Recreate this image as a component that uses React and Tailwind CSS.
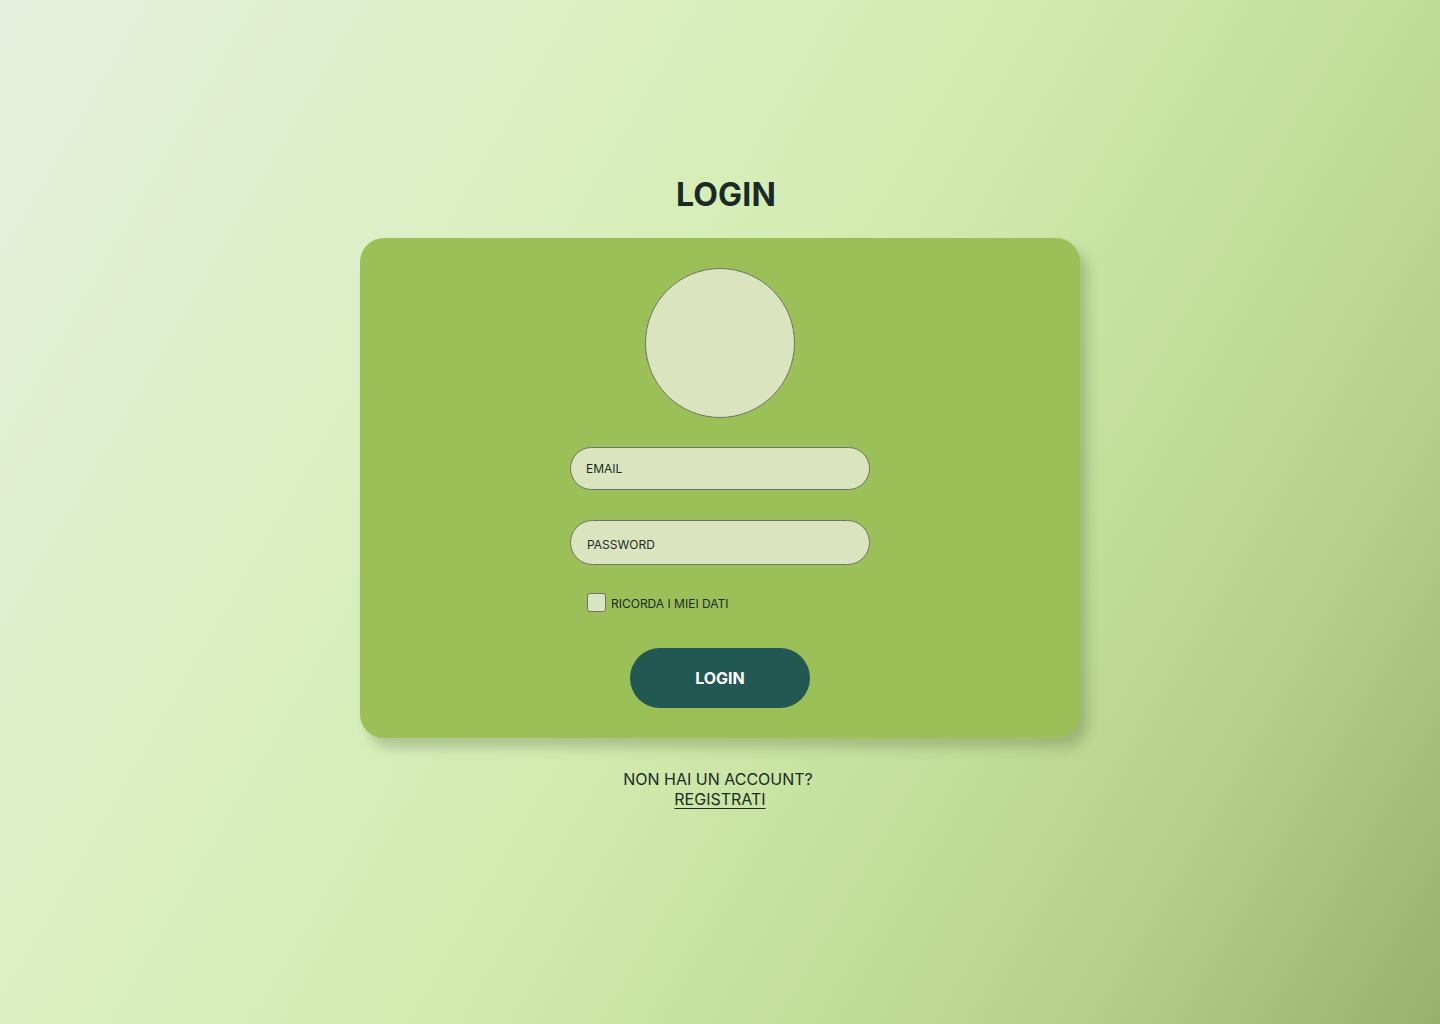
export default function App() {
  return (
    <div
      className="min-h-screen w-full bg-[linear-gradient(120deg,#e6f0dd_0%,#dcefc3_29%,#d3edb1_48%,#c0dd97_71%,#b5cf8b_83%,#96b26c_100%)] font-['Inter',sans-serif] text-[#1b2b27]"
    >
      <div className="flex flex-col items-center pt-[174px]">
        <h1 className="pl-[12px] text-[32px] font-bold leading-[42px] tracking-[0.2px] text-[#1a2a26]">LOGIN</h1>

        <form
          className="mt-[22px] flex h-[500px] w-[720px] flex-col items-center rounded-[24px] bg-[#9bc057] pt-[30px] shadow-[8px_10px_12px_rgba(60,80,40,0.25)]"
          onSubmit={(e) => e.preventDefault()}
        >
          <div className="h-[150px] w-[150px] rounded-full border border-[#6f7468] bg-[#dae5c0]" />

          <input
            type="email"
            placeholder="EMAIL"
            className="mt-[29px] h-[43px] w-[300px] rounded-full border border-[#6f7468] bg-[#dae5c0] px-[15px] text-[12px] text-[#1b2b27] outline-none placeholder:text-[#1b2b27]"
          />
          <input
            type="password"
            placeholder="PASSWORD"
            className="mt-[30px] h-[45px] w-[300px] rounded-full border border-[#6f7468] bg-[#dae5c0] px-[16px] pt-[3px] text-[12px] text-[#1b2b27] outline-none placeholder:text-[#1b2b27]"
          />

          <label className="mt-[28px] flex h-[19px] w-[300px] items-center gap-[5px] pl-[17px] text-[12px] text-[#1b2b27]">
            <span className="h-[19px] w-[19px] rounded-[3px] border border-[#6f7468] bg-[#dae5c0]" />
            <span className="pt-[2px]">RICORDA I MIEI DATI</span>
          </label>

          <button
            type="submit"
            className="mt-[36px] h-[60px] w-[180px] rounded-full bg-[#215852] text-[16px] font-bold text-white"
          >
            LOGIN
          </button>
        </form>

        <div className="mt-[31px] flex flex-col items-center text-[16px] leading-[20px] text-[#1b2b27]">
          <span className="-ml-[4px]">NON HAI UN ACCOUNT?</span>
          <a href="#" className="underline underline-offset-[3px]">REGISTRATI</a>
        </div>
      </div>
    </div>
  );
}
